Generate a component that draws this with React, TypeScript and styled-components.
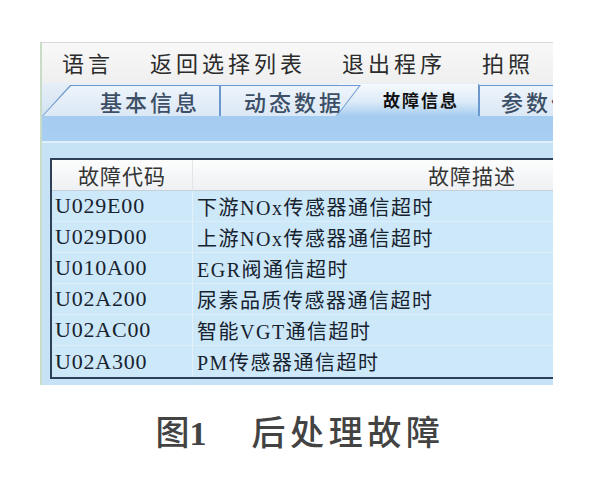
import React from "react";
import styled, { createGlobalStyle } from "styled-components";

const GlobalStyle = createGlobalStyle`
    html, body {
        margin: 0;
        padding: 0;
        background: #ffffff;
    }
`;

const Page = styled.div`
    width: 600px;
    height: 485px;
    padding-top: 42px;
    box-sizing: border-box;
    font-family: "Noto Sans CJK SC", "Noto Sans", sans-serif;
`;

const Frame = styled.div`
    margin-left: 40px;
    width: 513px;
    overflow: hidden;
    border-left: 2px solid #c9dcc6;
    box-sizing: border-box;
    background: #c6e3f6;
    padding-bottom: 6px;
`;

const MenuBar = styled.div`
    display: flex;
    align-items: center;
    gap: 36px;
    height: 41px;
    padding: 0 0 3px 20px;
    box-sizing: border-box;
    background: linear-gradient(#f8f8f8, #efefef);
    border-top: 1px solid #d8d8d8;
`;

const MenuItem = styled.span`
    font-size: 22px;
    letter-spacing: 4px;
    color: #2b2b2b;
    white-space: nowrap;
`;

const TabStrip = styled.div`
    display: flex;
    align-items: flex-end;
    height: 33px;
    background: linear-gradient(#e6eef7, #d3e3f3);
`;

type TabShape = "slantLeft" | "slantRight" | "plain";

const shapes: Record<TabShape, { outer: string; inner: string }> = {
    slantLeft: {
        outer: "polygon(0 100%, 28px 0, 100% 0, 100% 100%)",
        inner: "polygon(1px 100%, 29px 1px, calc(100% - 1px) 1px, calc(100% - 1px) 100%)"
    },
    slantRight: {
        outer: "polygon(0 0, 100% 0, calc(100% - 24px) 100%, 0 100%)",
        inner: "polygon(1px 1px, calc(100% - 2px) 1px, calc(100% - 25px) 100%, 1px 100%)"
    },
    plain: {
        outer: "polygon(0 0, 100% 0, 100% 100%, 0 100%)",
        inner: "polygon(1px 1px, 100% 1px, 100% 100%, 1px 100%)"
    }
};

const TabOuter = styled.div<{ $shape: TabShape; $width: number }>`
    position: relative;
    z-index: 2;
    flex: none;
    width: ${(p) => p.$width}px;
    height: 31px;
    background: #6b98cf;
    clip-path: ${(p) => shapes[p.$shape].outer};
`;

const TabInner = styled.div<{ $shape: TabShape; $pad: number }>`
    display: flex;
    align-items: center;
    height: 100%;
    padding-left: ${(p) => p.$pad}px;
    box-sizing: border-box;
    background: linear-gradient(#eef4fb, #dbe8f5);
    clip-path: ${(p) => shapes[p.$shape].inner};
    font-size: 22px;
    letter-spacing: 3px;
    font-weight: 500;
    color: #3d4f66;
    white-space: nowrap;
`;

const ActiveTab = styled.div`
    position: relative;
    z-index: 1;
    flex: none;
    display: flex;
    align-items: center;
    width: 141px;
    height: 32px;
    margin-left: -23px;
    padding-left: 45px;
    padding-bottom: 2px;
    box-sizing: border-box;
    background: linear-gradient(#f6f9fd 0%, #dcebf8 55%, #a7cdf1 100%);
    border-right: 1px solid #6b98cf;
    font-size: 17px;
    font-weight: 700;
    letter-spacing: 2px;
    color: #111111;
    white-space: nowrap;
`;

const BlueBand = styled.div`
    height: 25px;
    background: linear-gradient(#a4cbf0, #a9d0f3);
    border-bottom: 2px solid #def1fb;
`;

const Panel = styled.div`
    padding: 15px 0 0 8px;
`;

const Table = styled.div`
    border-top: 2px solid #2e4058;
    border-left: 2px solid #2e4058;
    border-bottom: 2px solid #2e4058;
    width: 640px;
`;

const Row = styled.div<{ $header?: boolean }>`
    display: grid;
    grid-template-columns: 141px 1fr;
    height: 31px;
    align-items: center;
    background: ${(p) => (p.$header ? "linear-gradient(#fdfdfd, #eef0f3)" : "#cde8f8")};
    border-bottom: 1px solid ${(p) => (p.$header ? "#c5d0da" : "#ddeef9")};
    box-sizing: border-box;
    &:last-child {
        border-bottom: none;
    }
`;

const HeadCell = styled.div<{ $pad: number }>`
    height: 100%;
    display: flex;
    align-items: center;
    padding-left: ${(p) => p.$pad}px;
    font-size: 21px;
    letter-spacing: 1px;
    color: #333333;
    border-right: 1px solid #e2e6ea;
    white-space: nowrap;
`;

const Cell = styled.div<{ $code?: boolean }>`
    height: 100%;
    display: flex;
    align-items: center;
    padding-left: ${(p) => (p.$code ? 3 : 4)}px;
    font-family: "Liberation Serif", "Noto Sans CJK SC", serif;
    font-size: ${(p) => (p.$code ? 22 : 20)}px;
    letter-spacing: ${(p) => (p.$code ? 0.8 : 1.5)}px;
    color: #17222f;
    border-right: 1px solid ${(p) => (p.$code ? "#e3f1fa" : "transparent")};
    white-space: nowrap;
`;

const Caption = styled.div`
    display: flex;
    justify-content: center;
    align-items: center;
    margin-top: 25px;
    height: 40px;
    color: #434343;
    font-size: 34px;
    font-weight: 500;
`;

const FigNo = styled.span`
    margin-right: 45px;
    .num {
        font-family: "Liberation Serif", serif;
        font-weight: 700;
    }
`;

const FigTitle = styled.span`
    letter-spacing: 4.6px;
`;

const faults: [string, string][] = [
    ["U029E00", "下游NOx传感器通信超时"],
    ["U029D00", "上游NOx传感器通信超时"],
    ["U010A00", "EGR阀通信超时"],
    ["U02A200", "尿素品质传感器通信超时"],
    ["U02AC00", "智能VGT通信超时"],
    ["U02A300", "PM传感器通信超时"]
];

const App: React.FC = (): React.ReactElement => {
    return (
        <Page>
            <GlobalStyle />
            <Frame>
                <MenuBar>
                    <MenuItem>语言</MenuItem>
                    <MenuItem>返回选择列表</MenuItem>
                    <MenuItem>退出程序</MenuItem>
                    <MenuItem>拍照</MenuItem>
                </MenuBar>
                <TabStrip>
                    <TabOuter $shape="slantLeft" $width={178}>
                        <TabInner $shape="slantLeft" $pad={58}>
                            基本信息
                        </TabInner>
                    </TabOuter>
                    <TabOuter $shape="slantRight" $width={141}>
                        <TabInner $shape="slantRight" $pad={24}>
                            动态数据
                        </TabInner>
                    </TabOuter>
                    <ActiveTab>故障信息</ActiveTab>
                    <TabOuter $shape="plain" $width={120}>
                        <TabInner $shape="plain" $pad={22}>
                            参数信息
                        </TabInner>
                    </TabOuter>
                </TabStrip>
                <BlueBand />
                <Panel>
                    <Table>
                        <Row $header>
                            <HeadCell $pad={26}>故障代码</HeadCell>
                            <HeadCell $pad={235}>故障描述</HeadCell>
                        </Row>
                        {faults.map(([code, desc]) => (
                            <Row key={code}>
                                <Cell $code>{code}</Cell>
                                <Cell>{desc}</Cell>
                            </Row>
                        ))}
                    </Table>
                </Panel>
            </Frame>
            <Caption>
                <FigNo>
                    图<span className="num">1</span>
                </FigNo>
                <FigTitle>后处理故障</FigTitle>
            </Caption>
        </Page>
    );
};

export default App;
